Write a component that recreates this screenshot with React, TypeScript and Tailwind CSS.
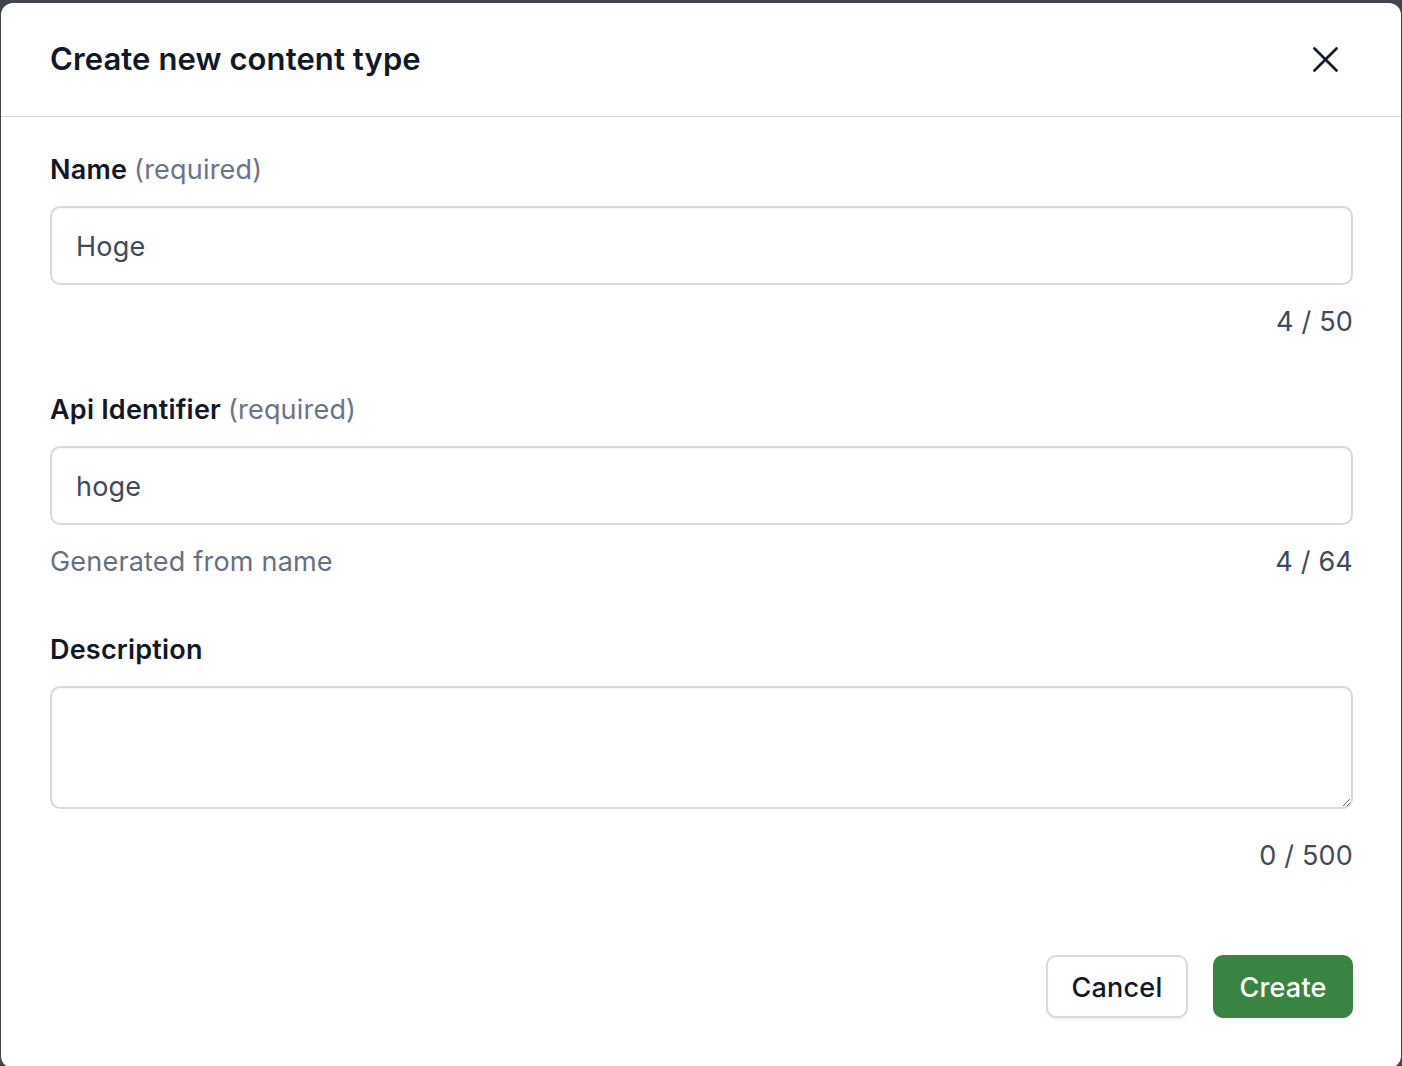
import React, { useState } from 'react';

const font = { fontFamily: 'Inter, "Noto Sans", sans-serif' };

function Counter({ value, max }: { value: number; max: number }) {
    return (
        <span className="text-[27px] leading-[32px] tracking-[0.2px] text-[#3f4a5c]">
            {value} / {max}
        </span>
    );
}

export default function App() {
    const [name, setName] = useState('Hoge');
    const [apiId, setApiId] = useState('hoge');
    const [description, setDescription] = useState('');

    return (
        <div className="min-h-[1066px] w-full bg-[#41464d] pt-[3px] pl-[1px]" style={font}>
            <div className="flex h-[1065px] w-[1400px] flex-col rounded-[12px] bg-white">
                {/* header */}
                <div className="flex h-[114px] shrink-0 items-center justify-between border-b border-[#d3d9df] pl-[49px] pr-[63px]">
                    <h2 className="text-[31px] font-semibold tracking-[0.1px] text-[#111827]">
                        Create new content type
                    </h2>
                    <button aria-label="Close" className="text-[#111827]">
                        <svg width="25" height="25" viewBox="0 0 25 25" fill="none">
                            <path d="M1.5 1.5L23.5 23.5M23.5 1.5L1.5 23.5" stroke="currentColor" strokeWidth="2.7" strokeLinecap="round" />
                        </svg>
                    </button>
                </div>

                {/* body */}
                <div className="flex flex-col pl-[49px] pr-[48px] pt-[37px] tracking-[0.2px]">
                    <label className="text-[27px] leading-[32px] font-semibold text-[#111827]">
                        Name <span className="font-normal text-[#6b7488]">(required)</span>
                    </label>
                    <input
                        value={name}
                        onChange={(e) => setName(e.target.value)}
                        className="mt-[20px] h-[79px] w-full rounded-[10px] border-2 border-[#d3dae1] px-[24px] pt-[2px] text-[27px] text-[#3f4a5c] shadow-[inset_0_2px_2px_rgba(0,0,0,0.03)] outline-none"
                    />
                    <div className="mt-[21px] flex justify-end">
                        <Counter value={name.length} max={50} />
                    </div>

                    <label className="mt-[56px] text-[27px] leading-[32px] font-semibold text-[#111827]">
                        Api Identifier <span className="font-normal text-[#6b7488]">(required)</span>
                    </label>
                    <input
                        value={apiId}
                        onChange={(e) => setApiId(e.target.value)}
                        className="mt-[20px] h-[79px] w-full rounded-[10px] border-2 border-[#d3dae1] px-[24px] pt-[2px] text-[27px] text-[#3f4a5c] shadow-[inset_0_2px_2px_rgba(0,0,0,0.03)] outline-none"
                    />
                    <div className="mt-[21px] flex items-center justify-between">
                        <span className="text-[27px] leading-[32px] text-[#667085]">Generated from name</span>
                        <Counter value={apiId.length} max={64} />
                    </div>

                    <label className="mt-[56px] text-[27px] leading-[32px] font-semibold text-[#111827]">
                        Description
                    </label>
                    <textarea
                        value={description}
                        onChange={(e) => setDescription(e.target.value)}
                        className="mt-[20px] block h-[123px] w-full rounded-[10px] border-2 border-[#d3dae1] px-[24px] py-[16px] text-[27px] text-[#3f4a5c] shadow-[inset_0_2px_2px_rgba(0,0,0,0.03)] outline-none"
                    />
                    <div className="mt-[31px] flex justify-end">
                        <Counter value={description.length} max={500} />
                    </div>

                    <div className="mt-[83px] flex justify-end gap-[25px]">
                        <button className="h-[63px] w-[142px] rounded-[10px] border-2 border-[#d3dae1] bg-white pt-[4px] text-[27px] font-medium text-[#111827] shadow-[0_2px_2px_rgba(0,0,0,0.06)]">
                            Cancel
                        </button>
                        <button className="h-[63px] w-[140px] rounded-[10px] bg-[#3a8443] pt-[4px] text-[27px] font-medium text-white">
                            Create
                        </button>
                    </div>
                </div>
            </div>
        </div>
    );
}
